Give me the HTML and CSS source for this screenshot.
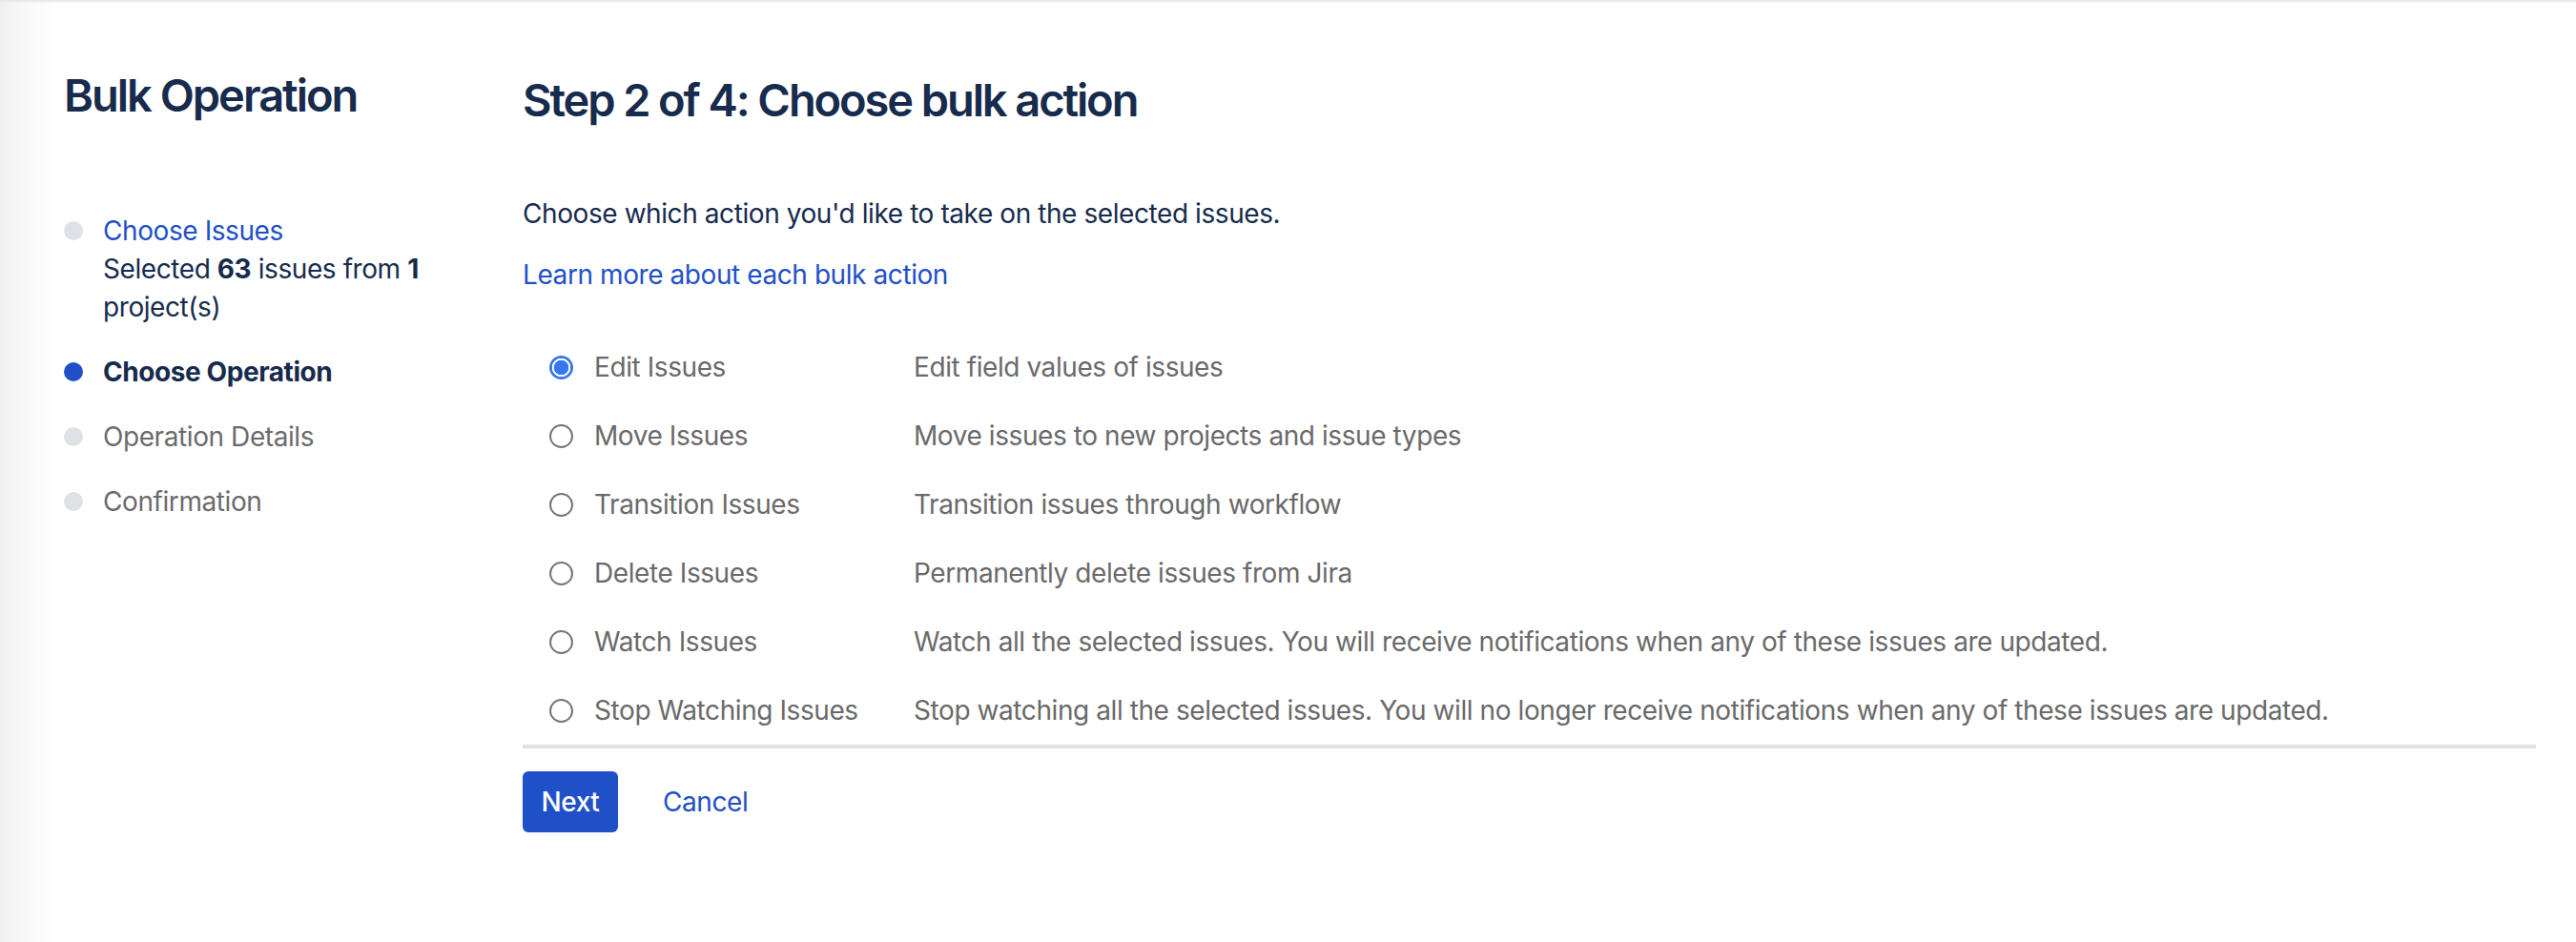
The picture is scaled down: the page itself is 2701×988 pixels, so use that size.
FILE: index.html
```html
<!DOCTYPE html>
<html lang="en">
<head>
<meta charset="utf-8">
<title>Bulk Operation</title>
<link rel="stylesheet" href="styles.css">
</head>
<body>
<div class="page">
  <aside class="sidebar">
    <h1 class="sidebar-title">Bulk Operation</h1>
    <ol class="steps">
      <li class="step step-done">
        <span class="dot"></span>
        <div class="step-body">
          <a class="step-link" href="#">Choose Issues</a>
          <div class="step-note">Selected <b>63</b> issues from <b>1</b> project(s)</div>
        </div>
      </li>
      <li class="step step-current">
        <span class="dot"></span>
        <div class="step-body">Choose Operation</div>
      </li>
      <li class="step step-todo">
        <span class="dot"></span>
        <div class="step-body">Operation Details</div>
      </li>
      <li class="step step-todo">
        <span class="dot"></span>
        <div class="step-body">Confirmation</div>
      </li>
    </ol>
  </aside>
  <main class="content">
    <h2 class="content-title">Step 2 of 4: Choose bulk action</h2>
    <p class="intro">Choose which action you'd like to take on the selected issues.</p>
    <a class="learn" href="#">Learn more about each bulk action</a>
    <div class="ops">
      <label class="op-row">
        <span class="op-radio"><input type="radio" name="op" checked></span>
        <span class="op-name">Edit Issues</span>
        <span class="op-desc">Edit field values of issues</span>
      </label>
      <label class="op-row">
        <span class="op-radio"><input type="radio" name="op"></span>
        <span class="op-name">Move Issues</span>
        <span class="op-desc">Move issues to new projects and issue types</span>
      </label>
      <label class="op-row">
        <span class="op-radio"><input type="radio" name="op"></span>
        <span class="op-name">Transition Issues</span>
        <span class="op-desc">Transition issues through workflow</span>
      </label>
      <label class="op-row">
        <span class="op-radio"><input type="radio" name="op"></span>
        <span class="op-name">Delete Issues</span>
        <span class="op-desc">Permanently delete issues from Jira</span>
      </label>
      <label class="op-row">
        <span class="op-radio"><input type="radio" name="op"></span>
        <span class="op-name">Watch Issues</span>
        <span class="op-desc">Watch all the selected issues. You will receive notifications when any of these issues are updated.</span>
      </label>
      <label class="op-row">
        <span class="op-radio"><input type="radio" name="op"></span>
        <span class="op-name">Stop Watching Issues</span>
        <span class="op-desc">Stop watching all the selected issues. You will no longer receive notifications when any of these issues are updated.</span>
      </label>
    </div>
    <div class="actions">
      <button class="btn-primary" type="button">Next</button>
      <a class="btn-link" href="#">Cancel</a>
    </div>
  </main>
</div>
</body>
</html>
```
FILE: styles.css
```css
html, body {
  margin: 0;
  padding: 0;
  background: #ffffff;
}

body {
  font-family: Inter, "Noto Sans", "Liberation Sans", sans-serif;
  font-size: 28px;
  line-height: 40px;
  letter-spacing: -0.42px;
  color: #172b4d;
  height: 988px;
  overflow: hidden;
}

.page {
  display: flex;
  height: 988px;
  background: linear-gradient(to right, #f1f1f2 0, #f8f8f9 25px, #ffffff 60px);
  box-shadow: inset 0 3px 2px -1px #e6e7ea;
}

/* Sidebar */
.sidebar {
  width: 481px;
  flex: none;
  padding: 72px 0 0 67px;
}

.sidebar-title {
  margin: 0;
  font-size: 47px;
  line-height: 56px;
  font-weight: 600;
  color: #172b4d;
  letter-spacing: -2px;
}

.steps {
  list-style: none;
  margin: 94px 0 0;
  padding: 0;
  display: flex;
  flex-direction: column;
  gap: 28px;
}

.step {
  display: flex;
  align-items: flex-start;
}

.dot {
  flex: none;
  width: 20px;
  height: 20px;
  border-radius: 50%;
  background: #dfe1e6;
  margin-top: 10px;
  margin-right: 21px;
}

.step-body {
  max-width: 370px;
}

.step-link {
  color: #1f50c8;
  text-decoration: none;
}

.step-note b {
  font-weight: 700;
}

.step-current .dot {
  background: #1f50c8;
}

.step-current .step-body {
  font-weight: 700;
}

.step-todo .step-body {
  color: #6b6b6d;
}

/* Content */
.content {
  flex: 1;
  padding: 77px 42px 0 0;
}

.content-title {
  margin: 0;
  font-size: 47px;
  line-height: 56px;
  font-weight: 600;
  color: #172b4d;
  letter-spacing: -2.1px;
}

.intro {
  margin: 71px 0 0;
}

.learn {
  display: inline-block;
  margin-top: 24px;
  color: #1f50c8;
  text-decoration: none;
}

.ops {
  margin-top: 41px;
  border-bottom: 4px solid #dfe1e5;
}

.op-row {
  display: grid;
  grid-template-columns: 75px 335px 1fr;
  align-items: center;
  height: 72px;
  color: #6a6a6a;
}

.op-radio {
  display: flex;
  align-items: center;
  padding-left: 28px;
}

.op-radio input {
  appearance: none;
  -webkit-appearance: none;
  margin: 0;
  width: 25px;
  height: 25px;
  border: 2.5px solid #767676;
  border-radius: 50%;
  background: #ffffff;
  box-sizing: border-box;
}

.op-radio input:checked {
  border: none;
  background: radial-gradient(circle, #3478f6 0 7.5px, #ffffff 8px 9.5px, #3478f6 10px);
}

.actions {
  display: flex;
  align-items: center;
  margin-top: 24px;
  gap: 47px;
}

.btn-primary {
  font-family: inherit;
  font-size: 28px;
  font-weight: 500;
  line-height: 40px;
  letter-spacing: -0.42px;
  height: 64px;
  width: 100px;
  padding: 0;
  border: none;
  border-radius: 6px;
  background: #1f50c8;
  color: #ffffff;
}

.btn-link {
  color: #1f50c8;
  text-decoration: none;
}
```
